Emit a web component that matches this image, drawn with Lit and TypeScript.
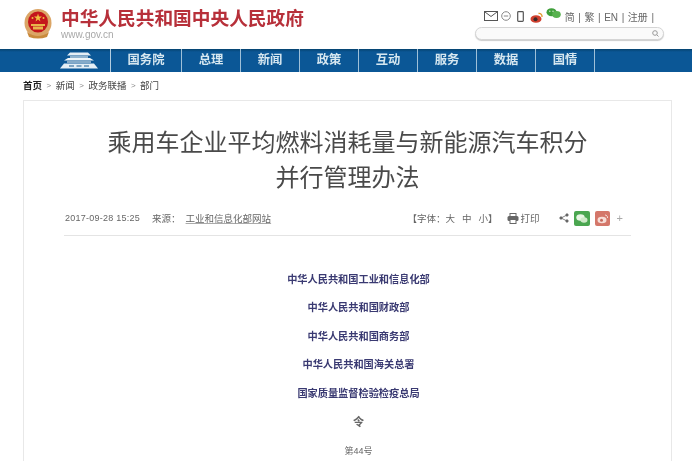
import { LitElement, html, css, svg } from "lit";
import { customElement } from "lit/decorators.js";

const NAV = ["国务院", "总理", "新闻", "政策", "互动", "服务", "数据", "国情"];
const ORGS = ["中华人民共和国工业和信息化部", "中华人民共和国财政部", "中华人民共和国商务部", "中华人民共和国海关总署", "国家质量监督检验检疫总局"];

const emblem = svg`<svg class="emblem" viewBox="0 0 28 30" width="28" height="30">
  <ellipse cx="14" cy="14" rx="13.500" ry="14" fill="#dba566"/>
  <ellipse cx="14" cy="13" rx="10" ry="10.500" fill="#c4161c"/>
  <polygon points="14,4.500 15,7.500 18,7.500 15.600,9.400 16.400,12.400 14,10.600 11.600,12.400 12.400,9.400 10,7.500 13,7.500" fill="#f0c040"/>
  <circle cx="8.500" cy="9" r="1" fill="#f0c040"/><circle cx="19.500" cy="9" r="1" fill="#f0c040"/>
  <rect x="7" y="15" width="14" height="2" fill="#e8b44c"/>
  <rect x="9" y="17.500" width="10" height="3" fill="#e8b44c"/>
  <path d="M3 23 Q14 31 25 23 L23 28 Q14 31 5 28Z" fill="#c98a3c"/>
</svg>`;

const gate = svg`<svg viewBox="0 0 38 17" width="38" height="17">
  <path d="M7 3.500 H31 L28 .5 H10Z" fill="#e4eef5"/>
  <rect x="10" y="4" width="18" height="2" fill="#8fb3cf"/>
  <path d="M4 8.500 H34 L30 6 H8Z" fill="#edf4f8"/>
  <rect x="7" y="9" width="24" height="2" fill="#86abc9"/>
  <path d="M0 16.500 L4 11.500 H34 L38 16.500Z" fill="#e4eef5"/>
  <path d="M9 14 h5 M16.500 14 h5 M24 14 h5" stroke="#5d8db3" stroke-width="1.500"/>
</svg>`;

const mail = svg`<svg class="i-mail" viewBox="0 0 14 10" width="14" height="10" fill="none" stroke="#555"><rect x=".5" y=".5" width="13" height="9"/><path d="M1 1l6 4.500L13 1"/></svg>`;
const circle = svg`<svg class="i-circle" viewBox="0 0 10 10" width="10" height="10" fill="none" stroke="#888"><circle cx="5" cy="5" r="4.300"/><path d="M2.800 5h4.400"/></svg>`;
const phone = svg`<svg class="i-phone" viewBox="0 0 7 11" width="7" height="11" fill="none" stroke="#555" stroke-width="1.200"><rect x=".7" y=".7" width="5.600" height="9.600" rx=".8"/></svg>`;
const weibo = svg`<svg class="i-weibo" viewBox="0 0 13 11" width="13" height="11"><ellipse cx="6" cy="7" rx="5.500" ry="3.800" fill="#d0402f"/><circle cx="5.500" cy="7.300" r="2" fill="#3a2a2a"/><path d="M8.500 1.500 a3 3 0 0 1 3.500 3.500" fill="none" stroke="#e39a2c" stroke-width="1.300"/></svg>`;
const wechat = svg`<svg class="i-wechat" viewBox="0 0 15 10" width="15" height="10"><ellipse cx="5.500" cy="4.200" rx="5" ry="4" fill="#3f9f3a"/><ellipse cx="10.500" cy="6.500" rx="4.300" ry="3.400" fill="#58b24f"/><circle cx="3.800" cy="3.300" r=".7" fill="#dff0da"/><circle cx="7" cy="3.300" r=".7" fill="#dff0da"/></svg>`;
const search = svg`<svg viewBox="0 0 7 7" width="7" height="7" fill="none" stroke="#999"><circle cx="3" cy="3" r="2.300"/><path d="M4.800 4.800L6.500 6.500"/></svg>`;
const printer = svg`<svg viewBox="0 0 12 11" width="12" height="11"><rect x="3" y=".5" width="6" height="3" fill="none" stroke="#666"/><rect x=".5" y="3" width="11" height="5" rx="1.500" fill="#666"/><rect x="3" y="6.500" width="6" height="4" fill="#fff" stroke="#666"/></svg>`;
const share = svg`<svg viewBox="0 0 10 10" width="10" height="10" fill="#666" stroke="#666" stroke-width=".8"><path d="M8 2L2 5l6 3" fill="none"/><circle cx="8" cy="2" r="1.200"/><circle cx="2" cy="5" r="1.200"/><circle cx="8" cy="8" r="1.200"/></svg>`;
const wxBtn = svg`<svg viewBox="0 0 16 15" width="16" height="15"><rect width="16" height="15" rx="2" fill="#4aa650"/><ellipse cx="6.500" cy="6.500" rx="4.200" ry="3.300" fill="#e8f5e4"/><ellipse cx="10" cy="9" rx="3.500" ry="2.700" fill="#cfeac9"/></svg>`;
const wbBtn = svg`<svg viewBox="0 0 15 15" width="15" height="15"><rect width="15" height="15" rx="2" fill="#d4776a"/><ellipse cx="7" cy="9" rx="4.500" ry="3.200" fill="#f6ddd6"/><circle cx="6.500" cy="9.300" r="1.500" fill="#c56a5e"/><path d="M10 4a2.500 2.500 0 0 1 2.500 3" fill="none" stroke="#f6ddd6"/></svg>`;

@customElement("app-root")
export class AppRoot extends LitElement {
  static styles = css`
    :host {
      display: block;
      width: 692px;
      height: 461px;
      overflow: hidden;
      background: #fff;
      font-family: "Liberation Sans", "Noto Sans CJK SC", sans-serif;
      color: #333;
    }
    .page { filter: blur(.35px); }
    .top {
      height: 49px;
      display: flex;
      justify-content: space-between;
      box-sizing: border-box;
      padding: 8px 28px 0 24px;
    }
    .brand { display: flex; gap: 9px; height: 32px; margin-top: 1px; }
    .emblem { flex: none; }
    .brand-text { display: flex; flex-direction: column; }
    .site-name {
      font-size: 18.700px;
      line-height: 20px;
      font-weight: 700;
      color: #b7303a;
      white-space: nowrap;
    }
    .site-url { font-size: 10px; line-height: 11px; color: #a8a8a8; }
    .tools { display: flex; flex-direction: column; align-items: flex-end; width: 190px; }
    .tool-row { display: flex; align-items: center; height: 16px; padding-right: 10px; font-size: 10px; color: #666; white-space: nowrap; }
    .i-mail { margin-right: 3px; }
    .i-circle { margin-right: 6px; }
    .i-phone { margin-right: 6px; }
    .i-weibo { margin-right: 3px; margin-top: 2px; }
    .i-wechat { margin-right: 4px; margin-top: -6px; }
    .lang { word-spacing: .8px; }
    .search {
      width: 189px; height: 13px; box-sizing: border-box; margin-top: 3px;
      border: 1px solid #d5d5d5; border-radius: 7px; background: #fafafa;
      box-shadow: 0 1px 1px #ccc;
      display: flex; align-items: center; justify-content: flex-end; padding-right: 4px;
    }
    nav {
      height: 23px;
      background: linear-gradient(#06436f 0, #0b5796 3px);
      box-sizing: border-box;
      display: flex;
      padding-left: 52px;
    }
    .home { width: 59px; display: flex; align-items: center; justify-content: center; box-sizing: border-box; padding-right: 4px; border-right: 1px solid #b3cde0; }
    .nav-item {
      width: 59px; box-sizing: border-box;
      border-right: 1px solid #9fc0d8;
      color: #d6e7f0; font-weight: 700; font-size: 12.300px; line-height: 22px; text-align: center;
    }
    .nav-item.wide { width: 71px; }
    .crumbs { height: 28px; box-sizing: border-box; padding: 0 0 2px 23px; display: flex; gap: 4.500px; align-items: center; font-size: 9.500px; color: #444; }
    .crumbs b { color: #222; }
    .crumbs i { font-style: normal; color: #888; font-size: 8px; }
    .card {
      margin: 0 20px 0 23px;
      border: 1px solid #e8e8e8;
      border-bottom: none;
      height: 361px;
      box-sizing: border-box;
      padding: 24px 40px 0 40px;
    }
    h1 {
      margin: 0;
      font-size: 24px;
      line-height: 35px;
      font-weight: 400;
      color: #4a4a4a;
      text-align: center;
    }
    .meta {
      margin-top: 6px;
      height: 35px;
      box-sizing: border-box;
      border-bottom: 1px solid #e4e4e4;
      display: flex;
      align-items: center;
      justify-content: space-between;
      font-size: 9.500px;
      color: #666;
      white-space: nowrap;
    }
    .meta-left, .meta-right { display: flex; align-items: center; }
    .meta-left { padding-left: 1px; }
    .date { margin-right: 12px; font-size: 9px; letter-spacing: .25px; }
    .source { margin-left: 5px; text-decoration: underline; text-decoration-color: #aaa; }
    .meta-right { padding-right: 8px; }
    .fontsize { word-spacing: 4.400px; }
    .print { display: flex; gap: 2px; align-items: center; margin: 0 19px 0 9px; }
    .share { display: flex; gap: 5px; align-items: center; }
    .plus { color: #aaa; font-size: 11px; margin-left: 2px; }
    .orgs { margin-top: 30px; padding-left: 22px; display: flex; flex-direction: column; align-items: center; }
    .org { font-size: 10.200px; line-height: 28.400px; font-weight: 700; color: #3a3a72; white-space: nowrap; }
    .ling { font-size: 11px; line-height: 28px; color: #666; font-weight: 700; }
    .num { font-size: 9px; line-height: 30px; color: #666; }
  `;

  render() {
    return html`
      <div class="page">
        <div class="top">
          <div class="brand">
            ${emblem}
            <div class="brand-text">
              <div class="site-name">中华人民共和国中央人民政府</div>
              <div class="site-url">www.gov.cn</div>
            </div>
          </div>
          <div class="tools">
            <div class="tool-row">
              ${mail}${circle}${phone}${weibo}${wechat}
              <span class="lang">简 | 繁 | EN | 注册 |</span>
            </div>
            <div class="search">${search}</div>
          </div>
        </div>
        <nav>
          <div class="home">${gate}</div>
          ${NAV.map((n, i) => html`<div class="nav-item ${i === 0 ? "wide" : ""}">${n}</div>`)}
        </nav>
        <div class="crumbs">
          <b>首页</b><i>&gt;</i><span>新闻</span><i>&gt;</i><span>政务联播</span><i>&gt;</i><span>部门</span>
        </div>
        <div class="card">
          <h1>乘用车企业平均燃料消耗量与新能源汽车积分<br />并行管理办法</h1>
          <div class="meta">
            <div class="meta-left">
              <span class="date">2017-09-28 15:25</span><span>来源：</span><span class="source">工业和信息化部网站</span>
            </div>
            <div class="meta-right">
              <span class="fontsize">【字体：大 中 小】</span>
              <span class="print">${printer}打印</span>
              <span class="share">${share}${wxBtn}${wbBtn}<span class="plus">+</span></span>
            </div>
          </div>
          <div class="orgs">
            ${ORGS.map((o) => html`<div class="org">${o}</div>`)}
            <div class="ling">令</div>
            <div class="num">第44号</div>
          </div>
        </div>
      </div>
    `;
  }
}
